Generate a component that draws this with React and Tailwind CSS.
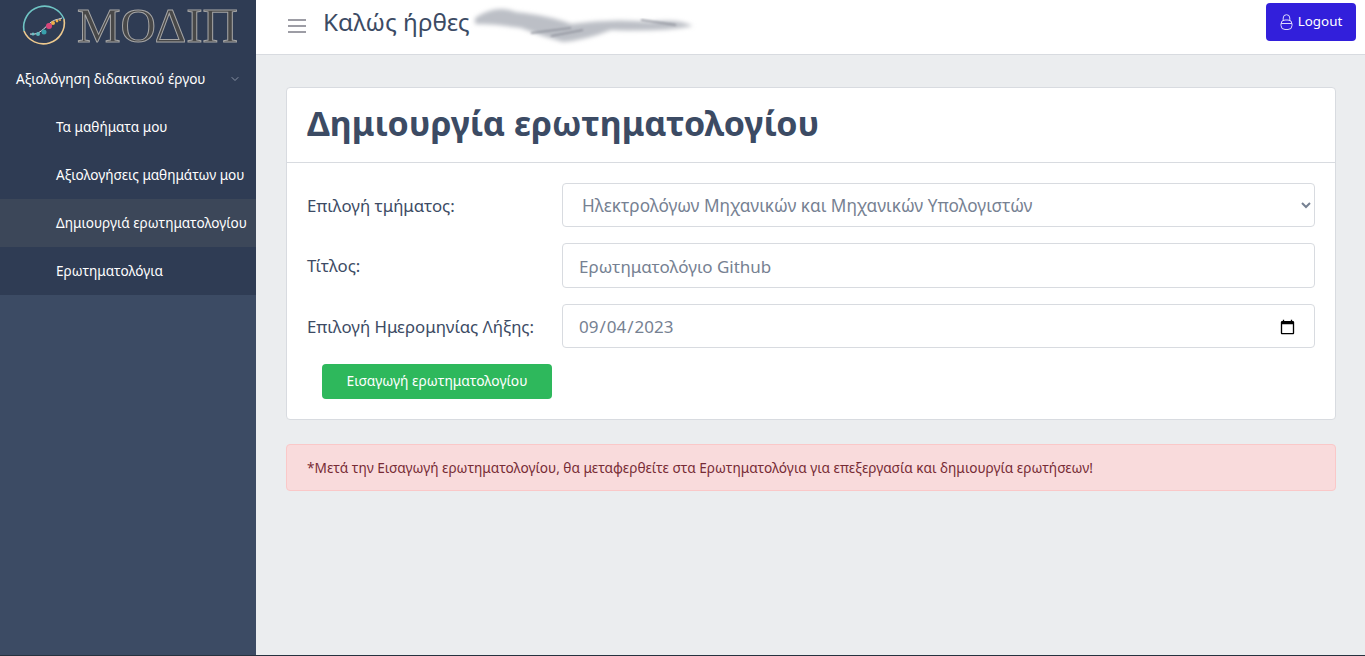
import React from 'react';
import { ChevronDown } from 'lucide-react';

const FONT = "font-['Noto_Sans','Open_Sans',sans-serif]";

const Logo = () => (
  <div className="flex items-center h-[55px] pb-[4px] pl-[21px] gap-[10px]">
    <svg width="46" height="46" viewBox="0 0 46 46">
      <path d="M3 28 A21 21 0 0 1 43 16" fill="none" stroke="#6fc4c4" strokeWidth="1.6" />
      <path d="M43 16 A21 21 0 0 1 3 28" fill="none" stroke="#edc98e" strokeWidth="1.6" />
      <path d="M9 31 C18 33 24 24 29 20 S36 17 41 15" fill="none" stroke="#dfe3e8" strokeWidth="1" />
      <circle cx="12" cy="31" r="1.5" fill="#6cc0c4" />
      <circle cx="17" cy="31" r="2" fill="#5cb6bc" />
      <circle cx="23" cy="29" r="2.5" fill="#38a0ac" />
      <circle cx="28" cy="23" r="3" fill="#d8447a" />
      <circle cx="32" cy="20" r="2" fill="#eeb04a" />
      <circle cx="36" cy="18" r="1.4" fill="#eeb04a" />
      <circle cx="39" cy="17" r="1" fill="#eeb04a" />
    </svg>
    <span className="font-['Liberation_Serif',serif] text-[49px] leading-none text-[#484848] [-webkit-text-stroke:1px_#a5a5a5]">
      ΜΟΔΙΠ
    </span>
  </div>
);

const SubItem = ({ children, active }) => (
  <div className={`h-12 pl-14 flex items-center text-[13.6px] text-white whitespace-nowrap ${active ? 'bg-[#3c4759]' : ''}`}>
    {children}
  </div>
);

const Field = ({ label, children }) => (
  <div className="flex items-center">
    <label className="w-[255px] pt-[1px] text-[16.8px] text-[#3c4b64]">{label}</label>
    <div className="flex-1">{children}</div>
  </div>
);

export default function App() {
  return (
    <div className={`${FONT} flex flex-col h-[656px] w-[1365px] overflow-hidden bg-[#ebedef]`}>
      <div className="flex flex-1 min-h-0">
        {/* Sidebar */}
        <aside className="w-[256px] shrink-0 bg-[#3c4b64]">
          <div className="bg-[#2f3c54]">
            <Logo />
            <div className="h-12 pl-4 pr-[15px] flex items-center justify-between text-[13.6px] text-white">
              <span>Αξιολόγηση διδακτικού έργου</span>
              <ChevronDown size={12} className="text-[#8a93a5]" />
            </div>
            <SubItem>Τα μαθήματα μου</SubItem>
            <SubItem>Αξιολογήσεις μαθημάτων μου</SubItem>
            <SubItem active>Δημιουργιά ερωτηματολογίου</SubItem>
            <SubItem>Ερωτηματολόγια</SubItem>
          </div>
        </aside>

        <div className="flex-1 min-w-0">
          {/* Header */}
          <header className="h-[55px] bg-white border-b border-[#d8dbe0] flex items-center pl-[32px] pr-[9px]">
            <svg width="18" height="14" viewBox="0 0 18 14" className="mb-[2px]">
              <path d="M0 1h18M0 7h18M0 13h18" stroke="#7d7d88" strokeWidth="1.5" />
            </svg>
            <span className="ml-[17px] mb-[10px] text-[24.3px] text-[#3c4b64]">Καλώς ήρθες</span>
            <svg width="230" height="50" viewBox="0 0 230 50" className="ml-[1px] mb-[5px]">
              <defs>
                <filter id="smear"><feGaussianBlur stdDeviation="2.2" /></filter>
                <filter id="smear2"><feGaussianBlur stdDeviation="0.8" /></filter>
              </defs>
              <path
                d="M4 18 Q25 4 45 12 Q80 16 100 24 Q140 18 180 22 Q205 18 222 26 Q190 32 140 30 Q115 40 92 42 Q70 36 50 28 Q25 24 4 24Z"
                fill="#bcbfc6"
                filter="url(#smear)"
              />
              <path d="M60 33 L100 28 M80 36 L112 30 M170 20 L205 25" stroke="#8d909a" strokeWidth="1.5" filter="url(#smear2)" />
            </svg>
            <button className="ml-auto mb-[10px] h-[38px] w-[90px] rounded bg-[#321fdb] text-white text-[13.4px] flex items-center justify-center gap-[5px] pb-[1px]">
              <svg width="13" height="16" viewBox="0 0 13 16" fill="none" stroke="#dcd9fb" strokeWidth="1">
                <rect x="1" y="6" width="11" height="9.5" rx="4" />
                <path d="M3.2 6.5V4a3.3 3.3 0 0 1 6.6 0v2.5M1 9.5h11" />
              </svg>
              Logout
            </button>
          </header>

          {/* Content */}
          <main className="pl-[30px] pr-[29px] pt-[32px]">
            <section className="bg-white border border-[#d8dbe0] rounded">
              <div className="h-[75px] border-b border-[#d8dbe0] px-5 pb-[4px] flex items-center">
                <h1 className="text-[34px] font-bold text-[#3c4b64]">Δημιουργία ερωτηματολογίου</h1>
              </div>
              <div className="px-5 pt-5 pb-5">
                <div className="flex flex-col gap-4">
                  <Field label="Επιλογή τμήματος:">
                    <select className="w-full h-[44px] rounded border border-[#d8dbe0] bg-white pl-[15px] pr-1 pt-[1px] text-[17.2px] text-[#768192] outline-none">
                      <option>Ηλεκτρολόγων Μηχανικών και Μηχανικών Υπολογιστών</option>
                    </select>
                  </Field>
                  <Field label="Τίτλος:">
                    <input
                      readOnly
                      value="Ερωτηματολόγιο Github"
                      className="w-full h-[45px] rounded border border-[#d8dbe0] px-4 pt-[2px] text-[17px] text-[#768192] outline-none"
                    />
                  </Field>
                  <Field label="Επιλογή Ημερομηνίας Λήξης:">
                    <input
                      type="date"
                      defaultValue="2023-09-04"
                      className="w-full h-[44px] rounded border border-[#d8dbe0] pl-[15px] pr-4 pt-[2px] text-[17px] text-[#768192] outline-none"
                    />
                  </Field>
                </div>
                <button className="ml-[15px] mt-4 block h-[35px] w-[230px] rounded bg-[#2eb85c] text-white text-[13.8px]">
                  Εισαγωγή ερωτηματολογίου
                </button>
              </div>
            </section>

            <div className="mt-6 h-[47px] rounded border border-[#fac8c8] bg-[#f9dbdc] px-5 pt-[1px] flex items-center text-[13.65px] text-[#772b35]">
              *Μετά την Εισαγωγή ερωτηματολογίου, θα μεταφερθείτε στα Ερωτηματολόγια για επεξεργασία και δημιουργία ερωτήσεων!
            </div>
          </main>
        </div>
      </div>
      <div className="h-px shrink-0 bg-[#26323f]" />
    </div>
  );
}
